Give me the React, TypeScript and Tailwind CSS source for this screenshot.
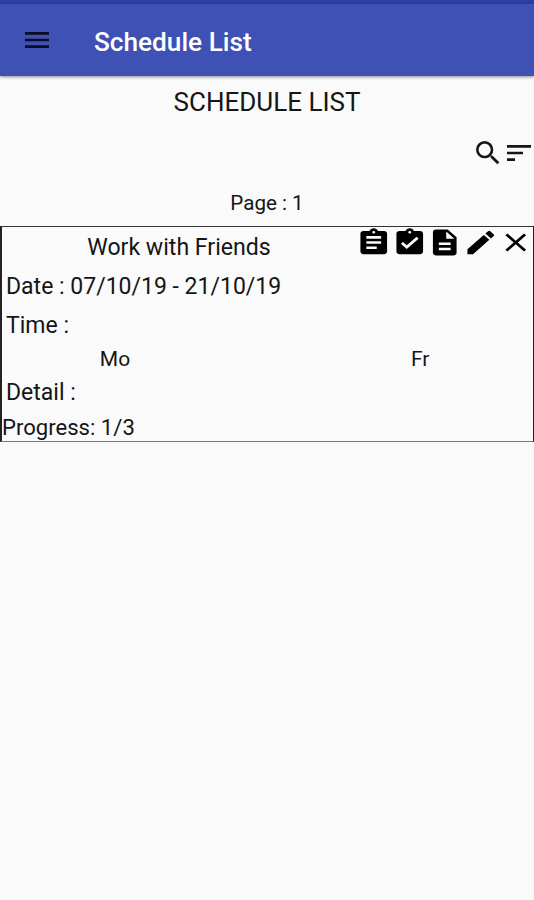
import React from 'react';

type IconProps = { d: string; className?: string; stretch?: boolean };

function Icon({ d, className = '', stretch = false }: IconProps) {
  return (
    <svg viewBox="0 0 24 24" fill="currentColor" preserveAspectRatio={stretch ? 'none' : 'xMidYMid meet'} className={`block shrink-0 ${className}`}>
      <path d={d} />
    </svg>
  );
}

const menu = 'M3 18h18v-2H3v2zm0-5h18v-2H3v2zm0-7v2h18V6H3z';
const search =
  'M15.5 14h-.79l-.28-.27A6.471 6.471 0 0 0 16 9.5 6.5 6.5 0 1 0 9.5 16c1.61 0 3.09-.59 4.23-1.57l.27.28v.79l5 4.99L20.49 19l-4.99-5zm-6 0C7.01 14 5 11.99 5 9.5S7.01 5 9.5 5 14 7.01 14 9.5 11.99 14 9.5 14z';
const sort = 'M3 18h6v-2H3v2zM3 6v2h18V6H3zm0 7h12v-2H3v2z';

const actions = [
  {
    name: 'Tasks',
    d: 'M19 3h-4.18C14.4 1.84 13.3 1 12 1c-1.3 0-2.4.84-2.82 2H5c-1.1 0-2 .9-2 2v14c0 1.1.9 2 2 2h14c1.1 0 2-.9 2-2V5c0-1.1-.9-2-2-2zm-7 0c.55 0 1 .45 1 1s-.45 1-1 1-1-.45-1-1 .45-1 1-1zm2 14H7v-2h7v2zm3-4H7v-2h10v2zm0-4H7V7h10v2z',
  },
  {
    name: 'Complete',
    d: 'M19 3h-4.18C14.4 1.84 13.3 1 12 1c-1.3 0-2.4.84-2.82 2H5c-1.1 0-2 .9-2 2v14c0 1.1.9 2 2 2h14c1.1 0 2-.9 2-2V5c0-1.1-.9-2-2-2zm-7 0c.55 0 1 .45 1 1s-.45 1-1 1-1-.45-1-1 .45-1 1-1zm-2 14l-4-4 1.41-1.41L10 14.17l6.59-6.59L18 9l-8 8z',
  },
  {
    name: 'Document',
    d: 'M14 2H6c-1.1 0-1.99.9-1.99 2L4 20c0 1.1.89 2 1.99 2H18c1.1 0 2-.9 2-2V8l-6-6zm2 16H8v-2h8v2zm0-4H8v-2h8v2zm-3-5V3.5L18.5 9H13z',
  },
  {
    name: 'Edit',
    d: 'M3 17.25V21h3.75L17.81 9.94l-3.75-3.75L3 17.25zM20.71 7.04a.996.996 0 0 0 0-1.41l-2.34-2.34a.996.996 0 0 0-1.41 0l-1.83 1.83 3.75 3.75 1.83-1.83z',
  },
  {
    name: 'Remove',
    d: 'M19 6.41L17.59 5 12 10.59 6.41 5 5 6.41 10.59 12 5 17.59 6.41 19 12 13.41 17.59 19 19 17.59 13.41 12z',
  },
];

export default function App() {
  return (
    <div className="flex h-[900px] w-full flex-col overflow-hidden bg-[#fafafa] font-[Roboto,sans-serif] text-[#151515]">
      <div className="h-1 shrink-0 bg-[#303f9f]" />
      <header className="z-10 flex h-[72px] shrink-0 items-center bg-[#3f51b5] pl-[21px] shadow-[0_1px_3px_rgba(0,0,0,0.45)]">
        <button className="text-[#0b0d25]" aria-label="Menu">
          <Icon d={menu} className="size-8" />
        </button>
        <h1 className="ml-[41px] pt-[3px] text-[26.2px] leading-8 font-medium whitespace-nowrap text-white">Schedule List</h1>
      </header>

      <h2 className="h-[52px] shrink-0 text-center text-[26px] leading-[52px]">SCHEDULE LIST</h2>
      <div className="-mr-px flex h-[50px] shrink-0 justify-end pt-[9px]">
        <Icon d={search} className="-mr-px size-8" />
        <Icon d={sort} className="size-8" />
      </div>
      <p className="h-[48px] shrink-0 text-center text-[20.6px] leading-[50px]">Page : 1</p>

      <section className="flex h-[216px] shrink-0 flex-col border border-l-2 border-t-[#333] border-r-[#222] border-b-[#777] border-l-[#222]">
        <div className="flex h-[39px] shrink-0">
          <h3 className="flex-1 text-center text-[23.1px] leading-[41px]">Work with Friends</h3>
          <div className="-mr-[0.5px] flex">
            {actions.map((a) => (
              <button key={a.name} aria-label={a.name} className="h-[31px] w-[35.5px] text-black">
                <Icon d={a.d} stretch className="h-[31px] w-[35.5px]" />
              </button>
            ))}
          </div>
        </div>
        <p className="h-[39px] shrink-0 pl-1 text-[23px] leading-[41px]">Date : 07/10/19 - 21/10/19</p>
        <p className="h-[39px] shrink-0 pl-1 text-[23px] leading-[41px]">Time :</p>
        <div className="flex h-[28px] shrink-0 text-[21px] leading-[30px]">
          <span className="w-[226px] text-center">Mo</span>
          <span className="flex-1 pl-[183px]">Fr</span>
        </div>
        <p className="h-[39px] shrink-0 pl-1 text-[23px] leading-[42px]">Detail :</p>
        <p className="h-[30px] shrink-0 text-[22.1px] leading-[33px]">Progress: 1/3</p>
      </section>
    </div>
  );
}
